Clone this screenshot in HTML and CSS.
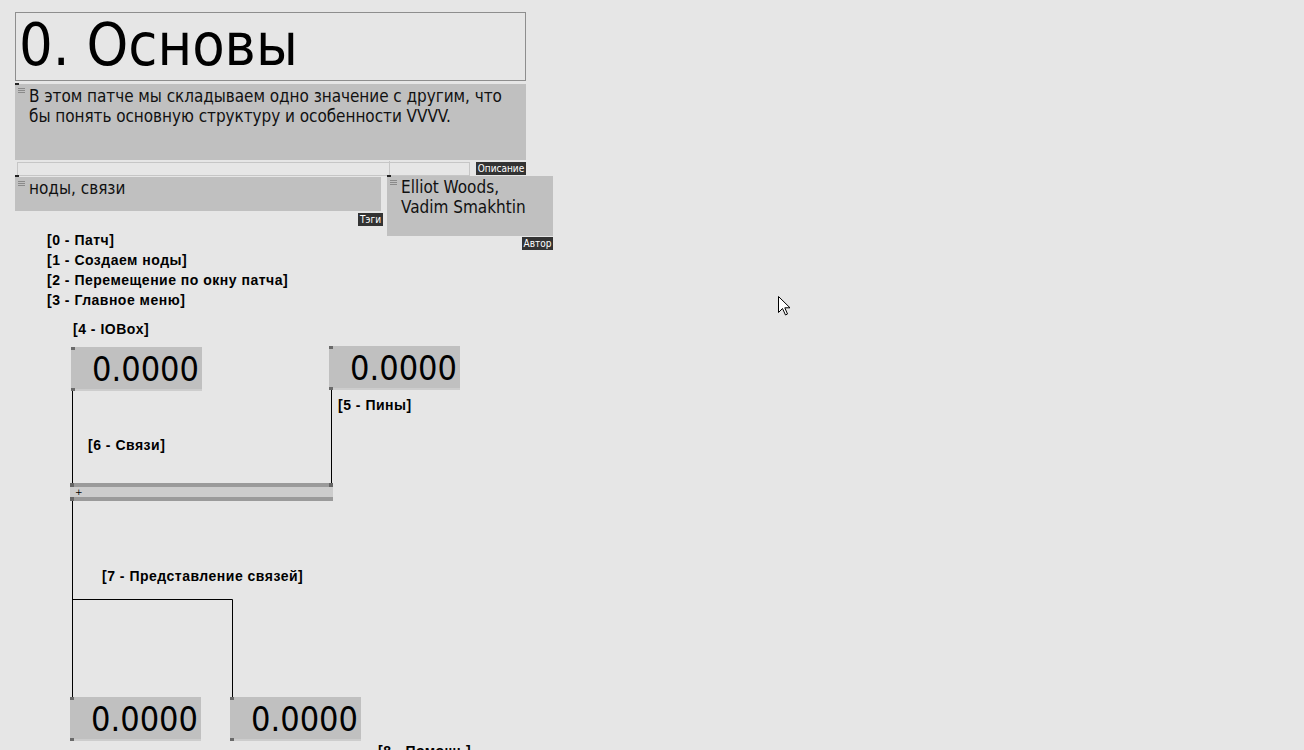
FILE: index.html
```html
<!DOCTYPE html>
<html lang="ru">
<head>
<meta charset="utf-8">
<title>0. Основы</title>
<link rel="stylesheet" href="styles.css">
</head>
<body>
<div class="patch">
  <svg class="links" width="1304" height="750" viewBox="0 0 1304 750">
    <g class="ghost">
      <rect x="17.5" y="162.5" width="452" height="13"></rect>
      <line x1="389.5" y1="161" x2="389.5" y2="176"></line>
    </g>
    <g class="wire">
      <line x1="72.5" y1="390" x2="72.5" y2="484"></line>
      <line x1="331.5" y1="390" x2="331.5" y2="484"></line>
      <line x1="72.5" y1="500" x2="72.5" y2="698"></line>
      <polyline points="72.5,599.5 232.5,599.5 232.5,698"></polyline>
    </g>
  </svg>

  <div class="node title">0. Основы</div>

  <div class="node textbox desc">
    <span class="grip"></span>
    <p>В этом патче мы складываем одно значение с другим, что бы понять основную структуру и особенности VVVV.</p>
  </div>
  <div class="node tag tag-desc">Описание</div>

  <div class="node textbox tags">
    <span class="grip"></span>
    <p>ноды, связи</p>
  </div>
  <div class="node tag tag-tags">Тэги</div>

  <div class="node textbox author">
    <span class="grip"></span>
    <p>Elliot Woods,<br>Vadim Smakhtin</p>
  </div>
  <div class="node tag tag-author">Автор</div>

  <div class="node notes">
    <p>[0 - Патч]</p>
    <p>[1 - Создаем ноды]</p>
    <p>[2 - Перемещение по окну патча]</p>
    <p>[3 - Главное меню]</p>
  </div>

  <div class="node note n4">[4 - IOBox]</div>
  <div class="node note n5">[5 - Пины]</div>
  <div class="node note n6">[6 - Связи]</div>
  <div class="node note n7">[7 - Представление связей]</div>
  <div class="node note n8">[8 - Помощь]</div>

  <div class="node iobox io1"><span class="pin pin-tl"></span><span class="pin pin-bl"></span>0.0000</div>
  <div class="node iobox io2"><span class="pin pin-tl"></span><span class="pin pin-bl"></span>0.0000</div>
  <div class="node iobox io3"><span class="pin pin-tl"></span><span class="pin pin-bl"></span>0.0000</div>
  <div class="node iobox io4"><span class="pin pin-tl"></span><span class="pin pin-bl"></span>0.0000</div>

  <div class="node add">
    <span class="pin pin-tl"></span><span class="pin pin-tr"></span><span class="pin pin-bl"></span>
    <span class="add-label">+</span>
  </div>

  <span class="pin pin-desc"></span>
  <span class="pin pin-tagsbox"></span>
  <span class="pin pin-authorbox"></span>

  <svg class="cursor" width="13" height="20" viewBox="0 0 13 20">
    <path d="M0.5 0.5 L0.5 16.5 L4.5 12.5 L7.5 19 L9.5 18 L6.8 11.8 L12 11.8 Z" fill="#fff" stroke="#000" stroke-width="1" stroke-linejoin="miter"></path>
  </svg>
</div>
</body>
</html>
```

FILE: styles.css
```css
html, body {
  margin: 0;
  padding: 0;
}

body {
  background: #e6e6e6;
  width: 1304px;
  height: 750px;
  overflow: hidden;
  font-family: "DejaVu Sans Condensed", "DejaVu Sans", sans-serif;
  color: #111;
}

.patch {
  position: relative;
  width: 1304px;
  height: 750px;
}

.links {
  position: absolute;
  left: 0;
  top: 0;
}

.ghost rect,
.ghost line {
  fill: none;
  stroke: #c6c6c6;
  stroke-width: 1;
}

.wire line,
.wire polyline {
  fill: none;
  stroke: #000;
  stroke-width: 1;
}

.node {
  position: absolute;
  box-sizing: border-box;
}

.node p {
  margin: 0;
}

.title {
  left: 15px;
  top: 12px;
  width: 511px;
  height: 69px;
  border: 1px solid #8e8e8e;
  font-size: 59px;
  line-height: 64px;
  padding-left: 3px;
  color: #000;
  white-space: nowrap;
}

.textbox {
  background: #c0c0c0;
  padding-left: 14px;
  font-size: 17px;
  line-height: 20px;
}

.grip {
  position: absolute;
  left: 3px;
  top: 4px;
  width: 7px;
  height: 6px;
  background: repeating-linear-gradient(to bottom, #8a8a8a 0, #8a8a8a 1px, transparent 1px, transparent 2px);
}

.desc {
  left: 15px;
  top: 84px;
  width: 511px;
  height: 76px;
  padding-top: 2px;
  padding-right: 16px;
  letter-spacing: -0.05px;
}

.tags {
  left: 15px;
  top: 177px;
  width: 366px;
  height: 34px;
  padding-top: 1px;
}

.author {
  left: 387px;
  top: 176px;
  width: 166px;
  height: 60px;
  padding-top: 1px;
}

.tag {
  background: #333;
  color: #fff;
  font-family: "DejaVu Sans Condensed", "DejaVu Sans", sans-serif;
  font-size: 10px;
  line-height: 13px;
  height: 13px;
  text-align: center;
  white-space: nowrap;
}

.tag-desc {
  left: 476px;
  top: 162px;
  width: 50px;
}

.tag-tags {
  left: 358px;
  top: 213px;
  width: 25px;
}

.tag-author {
  left: 522px;
  top: 237px;
  width: 31px;
}

.notes,
.note {
  font-family: "Liberation Sans", Arial, sans-serif;
  font-weight: bold;
  font-size: 14px;
  letter-spacing: 0.5px;
  line-height: 20px;
  color: #000;
  white-space: nowrap;
}

.notes {
  left: 47px;
  top: 230px;
}

.n4 { left: 73px; top: 319px; }
.n5 { left: 338px; top: 395px; }
.n6 { left: 88px; top: 435px; }
.n7 { left: 102px; top: 566px; }
.n8 { left: 378px; top: 741px; }

.iobox {
  width: 131px;
  height: 44px;
  background: #c0c0c0;
  border-bottom: 2px solid #cdcdcd;
  font-size: 34px;
  line-height: 45px;
  text-align: right;
  padding-right: 3px;
  color: #000;
}

.io1 { left: 71px; top: 347px; }
.io2 { left: 329px; top: 346px; }
.io3 { left: 70px; top: 697px; }
.io4 { left: 230px; top: 697px; }

.pin {
  position: absolute;
  width: 4px;
  height: 3px;
  background: #6a6a6a;
}

.pin-tl { left: 0; top: 0; }
.pin-tr { right: 0; top: 0; }
.pin-bl { left: 0; bottom: -2px; }

.add {
  left: 70px;
  top: 483px;
  width: 263px;
  height: 18px;
  background: #cccccc;
  border-top: 4px solid #9a9a9a;
  border-bottom: 4px solid #9a9a9a;
}

.add .pin { height: 4px; background: #666; }
.add .pin-tl { top: -4px; }
.add .pin-tr { top: -4px; }
.add .pin-bl { bottom: -4px; }

.add-label {
  position: absolute;
  left: 5px;
  top: -2px;
  font-family: "DejaVu Sans", sans-serif;
  font-size: 9px;
  line-height: 14px;
  color: #000;
}

.pin-desc { left: 15px; top: 83px; height: 2px; background: #222; }
.pin-tagsbox { left: 15px; top: 175px; height: 2px; background: #222; }
.pin-authorbox { left: 387px; top: 175px; height: 2px; background: #222; }

.cursor {
  position: absolute;
  left: 778px;
  top: 296px;
}
```
